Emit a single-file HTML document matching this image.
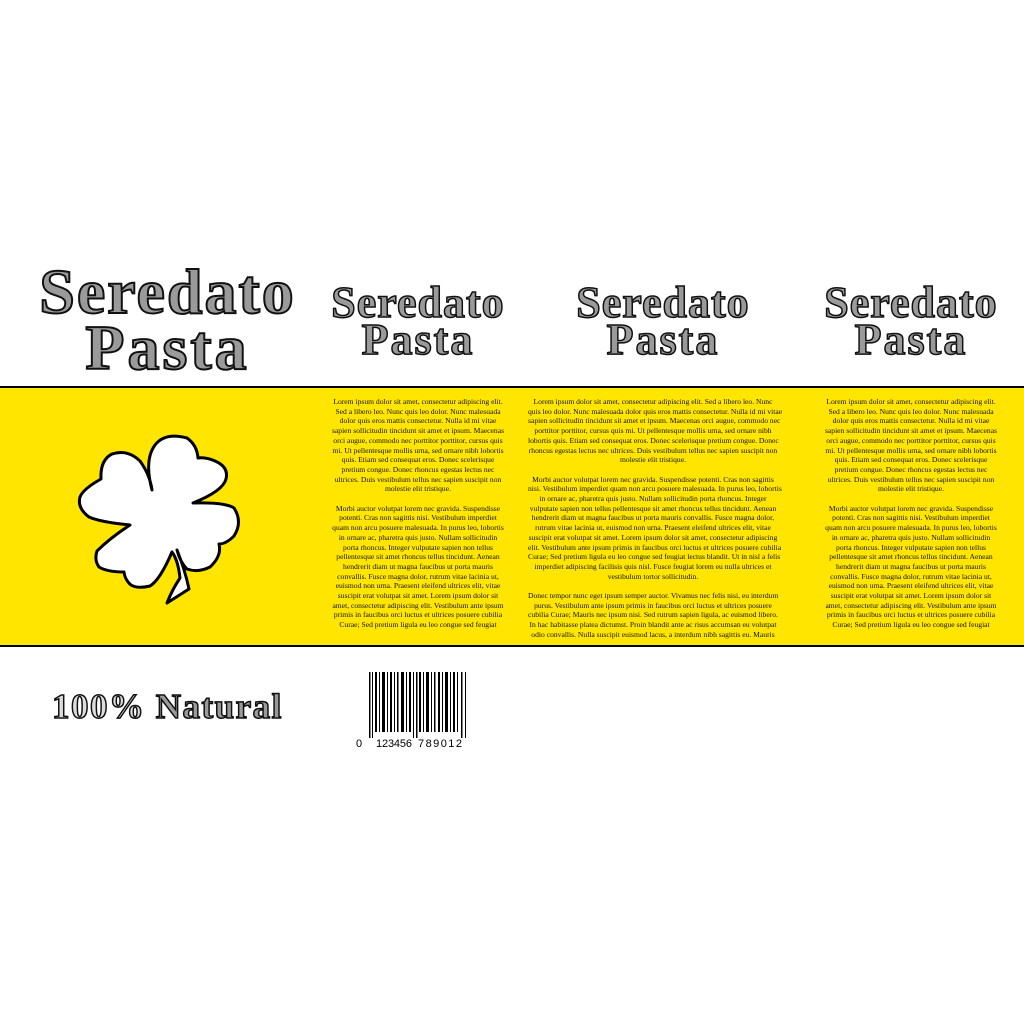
<!DOCTYPE html>
<html><head><meta charset="utf-8"><style>
html,body{margin:0;padding:0;background:#fff;width:1024px;height:1024px;overflow:hidden;position:relative}
.t{position:absolute;font-family:"Liberation Serif",serif;font-weight:bold;color:#9a9a9a;-webkit-text-stroke:2px #111;line-height:1;white-space:nowrap;text-align:center}
.band{position:absolute;left:0;top:386px;width:1024px;height:257px;background:#ffe500;border-top:2px solid #000;border-bottom:2px solid #000}
.col{position:absolute;top:397px;font-family:"Liberation Serif",serif;font-size:7.6px;line-height:9.7px;text-align:center;color:#111;white-space:nowrap}
.col p{margin:0 0 9.7px 0}
</style></head><body>
<div class="t" style="left:30px;top:260px;width:275px;font-size:64px;letter-spacing:2px">Seredato</div>
<div class="t" style="left:30px;top:316px;width:275px;font-size:64px;letter-spacing:3px">Pasta</div>
<div class="t" style="left:318px;top:281px;width:200px;font-size:44px;letter-spacing:1px;-webkit-text-stroke:1.5px #111">Seredato</div>
<div class="t" style="left:318px;top:318px;width:200px;font-size:44px;letter-spacing:2px;-webkit-text-stroke:1.5px #111">Pasta</div>
<div class="t" style="left:563px;top:281px;width:200px;font-size:44px;letter-spacing:1px;-webkit-text-stroke:1.5px #111">Seredato</div>
<div class="t" style="left:563px;top:318px;width:200px;font-size:44px;letter-spacing:2px;-webkit-text-stroke:1.5px #111">Pasta</div>
<div class="t" style="left:811px;top:281px;width:200px;font-size:44px;letter-spacing:1px;-webkit-text-stroke:1.5px #111">Seredato</div>
<div class="t" style="left:811px;top:318px;width:200px;font-size:44px;letter-spacing:2px;-webkit-text-stroke:1.5px #111">Pasta</div>

<div class="band"></div>
<svg style="position:absolute;left:0;top:0" width="1024" height="1024">
<path d="M152,490 Q144,460 155,445 Q165,432 187,438 Q197,445 198,458 Q206,457 215,461 Q229,467 226,479 Q223,491 193,503 Q225,502 234,508 Q243,522 234,536 Q226,544 219,544 Q222,556 210,567 Q198,573 187,569 Q180,562 177,550 Q185,570 189,589 L167,603 Q172,590 180,578 Q178,560 172,552 Q160,580 150,586 Q138,589 131,585 Q125,580 124,572 Q107,572 99,567 Q94,560 97,551 Q110,538 130,525 Q100,522 89,517 Q77,508 80,497 Q83,489 101,479 Q100,460 112,454 Q128,449 140,461 Q150,475 152,490 Z" fill="#fff" stroke="#000" stroke-width="3" stroke-linejoin="round"/>
</svg>

<div class="col" style="left:318px;width:200px">
<p>Lorem ipsum dolor sit amet, consectetur adipiscing elit.<br>Sed a libero leo. Nunc quis leo dolor. Nunc malesuada<br>dolor quis eros mattis consectetur. Nulla id mi vitae<br>sapien sollicitudin tincidunt sit amet et ipsum. Maecenas<br>orci augue, commodo nec porttitor porttitor, cursus quis<br>mi. Ut pellentesque mollis urna, sed ornare nibh lobortis<br>quis. Etiam sed consequat eros. Donec scelerisque<br>pretium congue. Donec rhoncus egestas lectus nec<br>ultrices. Duis vestibulum tellus nec sapien suscipit non<br>molestie elit tristique.</p>
<p>Morbi auctor volutpat lorem nec gravida. Suspendisse<br>potenti. Cras non sagittis nisi. Vestibulum imperdiet<br>quam non arcu posuere malesuada. In purus leo, lobortis<br>in ornare ac, pharetra quis justo. Nullam sollicitudin<br>porta rhoncus. Integer vulputate sapien non tellus<br>pellentesque sit amet rhoncus tellus tincidunt. Aenean<br>hendrerit diam ut magna faucibus ut porta mauris<br>convallis. Fusce magna dolor, rutrum vitae lacinia ut,<br>euismod non urna. Praesent eleifend ultrices elit, vitae<br>suscipit erat volutpat sit amet. Lorem ipsum dolor sit<br>amet, consectetur adipiscing elit. Vestibulum ante ipsum<br>primis in faucibus orci luctus et ultrices posuere cubilia<br>Curae; Sed pretium ligula eu leo congue sed feugiat</p>
</div>
<div class="col" style="left:528px;width:250px">
<p>Lorem ipsum dolor sit amet, consectetur adipiscing elit. Sed a libero leo. Nunc<br>quis leo dolor. Nunc malesuada dolor quis eros mattis consectetur. Nulla id mi vitae<br>sapien sollicitudin tincidunt sit amet et ipsum. Maecenas orci augue, commodo nec<br>porttitor porttitor, cursus quis mi. Ut pellentesque mollis urna, sed ornare nibh<br>lobortis quis. Etiam sed consequat eros. Donec scelerisque pretium congue. Donec<br>rhoncus egestas lectus nec ultrices. Duis vestibulum tellus nec sapien suscipit non<br>molestie elit tristique.</p>
<p>Morbi auctor volutpat lorem nec gravida. Suspendisse potenti. Cras non sagittis<br>nisi. Vestibulum imperdiet quam non arcu posuere malesuada. In purus leo, lobortis<br>in ornare ac, pharetra quis justo. Nullam sollicitudin porta rhoncus. Integer<br>vulputate sapien non tellus pellentesque sit amet rhoncus tellus tincidunt. Aenean<br>hendrerit diam ut magna faucibus ut porta mauris convallis. Fusce magna dolor,<br>rutrum vitae lacinia ut, euismod non urna. Praesent eleifend ultrices elit, vitae<br>suscipit erat volutpat sit amet. Lorem ipsum dolor sit amet, consectetur adipiscing<br>elit. Vestibulum ante ipsum primis in faucibus orci luctus et ultrices posuere cubilia<br>Curae; Sed pretium ligula eu leo congue sed feugiat lectus blandit. Ut in nisl a felis<br>imperdiet adipiscing facilisis quis nisl. Fusce feugiat lorem eu nulla ultrices et<br>vestibulum tortor sollicitudin.</p>
<p>Donec tempor nunc eget ipsum semper auctor. Vivamus nec felis nisi, eu interdum<br>purus. Vestibulum ante ipsum primis in faucibus orci luctus et ultrices posuere<br>cubilia Curae; Mauris nec ipsum nisi. Sed rutrum sapien ligula, ac euismod libero.<br>In hac habitasse platea dictumst. Proin blandit ante ac risus accumsan eu volutpat<br>odio convallis. Nulla suscipit euismod lacus, a interdum nibh sagittis eu. Mauris</p>
</div>
<div class="col" style="left:811px;width:200px">
<p>Lorem ipsum dolor sit amet, consectetur adipiscing elit.<br>Sed a libero leo. Nunc quis leo dolor. Nunc malesuada<br>dolor quis eros mattis consectetur. Nulla id mi vitae<br>sapien sollicitudin tincidunt sit amet et ipsum. Maecenas<br>orci augue, commodo nec porttitor porttitor, cursus quis<br>mi. Ut pellentesque mollis urna, sed ornare nibh lobortis<br>quis. Etiam sed consequat eros. Donec scelerisque<br>pretium congue. Donec rhoncus egestas lectus nec<br>ultrices. Duis vestibulum tellus nec sapien suscipit non<br>molestie elit tristique.</p>
<p>Morbi auctor volutpat lorem nec gravida. Suspendisse<br>potenti. Cras non sagittis nisi. Vestibulum imperdiet<br>quam non arcu posuere malesuada. In purus leo, lobortis<br>in ornare ac, pharetra quis justo. Nullam sollicitudin<br>porta rhoncus. Integer vulputate sapien non tellus<br>pellentesque sit amet rhoncus tellus tincidunt. Aenean<br>hendrerit diam ut magna faucibus ut porta mauris<br>convallis. Fusce magna dolor, rutrum vitae lacinia ut,<br>euismod non urna. Praesent eleifend ultrices elit, vitae<br>suscipit erat volutpat sit amet. Lorem ipsum dolor sit<br>amet, consectetur adipiscing elit. Vestibulum ante ipsum<br>primis in faucibus orci luctus et ultrices posuere cubilia<br>Curae; Sed pretium ligula eu leo congue sed feugiat</p>
</div>

<div class="t" style="left:52px;top:689px;font-size:35px;letter-spacing:1.5px;text-align:left;-webkit-text-stroke:1.5px #111"><span style="color:#ddd">100%</span> Natural</div>

<svg style="position:absolute;left:355px;top:672px" width="120" height="80">
<g fill="#000">
<rect x="14" y="0" width="1.5" height="66"/><rect x="17" y="0" width="1" height="66"/>
<rect x="20" y="0" width="2" height="60"/><rect x="24" y="0" width="1" height="60"/><rect x="27" y="0" width="3" height="60"/><rect x="32" y="0" width="1" height="60"/><rect x="35" y="0" width="2" height="60"/><rect x="39" y="0" width="1" height="60"/><rect x="42" y="0" width="1.5" height="60"/><rect x="46" y="0" width="3" height="60"/><rect x="51" y="0" width="1" height="60"/><rect x="54" y="0" width="2" height="60"/>
<rect x="58" y="0" width="1" height="66"/><rect x="61" y="0" width="1.5" height="66"/>
<rect x="64" y="0" width="2" height="60"/><rect x="68" y="0" width="1" height="60"/><rect x="71" y="0" width="3" height="60"/><rect x="76" y="0" width="1" height="60"/><rect x="79" y="0" width="1.5" height="60"/><rect x="83" y="0" width="2" height="60"/><rect x="87" y="0" width="1" height="60"/><rect x="90" y="0" width="3" height="60"/><rect x="95" y="0" width="1" height="60"/><rect x="98" y="0" width="2" height="60"/><rect x="102" y="0" width="1" height="60"/>
<rect x="106" y="0" width="1.5" height="66"/><rect x="110" y="0" width="1" height="66"/>
</g>
<text x="1" y="75" font-family="Liberation Sans,sans-serif" font-size="11">0</text>
<text x="21" y="75" font-family="Liberation Sans,sans-serif" font-size="11" textLength="36">123456</text>
<text x="63" y="75" font-family="Liberation Sans,sans-serif" font-size="11" textLength="44">789012</text>
</svg>
</body></html>
